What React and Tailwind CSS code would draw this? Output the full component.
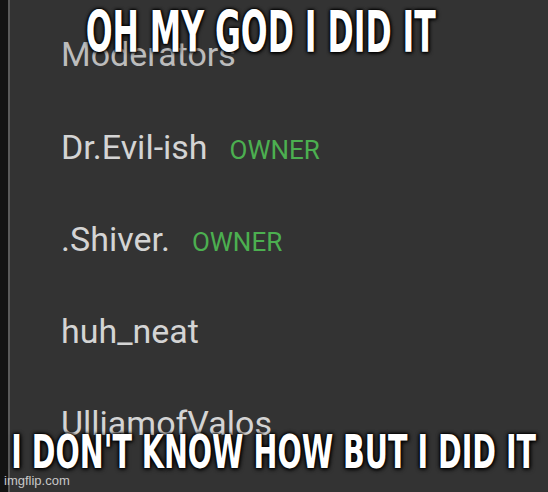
import React from "react";

const mods = [
    { name: "Dr.Evil-ish", owner: true },
    { name: ".Shiver.", owner: true },
    { name: "huh_neat", owner: false },
    { name: "UlliamofValos", owner: false },
];

const memeStyle = "absolute left-0 right-0 flex justify-center";
const memeText = "inline-block whitespace-nowrap text-white font-bold uppercase leading-none [font-family:'DejaVu_Sans_Condensed','DejaVu_Sans',sans-serif] [text-shadow:0_0_2px_#000,0_0_3px_#000,0_0_5px_#000,1px_1px_6px_#000]";

const App = () => {
    return (
        <div className="relative w-[548px] h-[492px] overflow-hidden flex bg-[#131313] [font-family:Roboto,sans-serif]">
            <div className="w-[8px] shrink-0" />
            <div className="w-[2px] shrink-0 bg-[#5a5a5a]" />
            <div className="flex-1 bg-[#333333] pl-[51px] pt-[30px]">
                <h2 className="text-[34px] leading-[48px] text-[#bcbcbc]">Moderators</h2>
                <div className="flex flex-col pt-[3px]">
                    {mods.map((m, i) => (
                        <div key={i} className="flex items-baseline gap-[22px] h-[92px] pt-[46px]">
                            <span className="text-[34px] leading-[40px] text-[#d4d4d4]">{m.name}</span>
                            {m.owner && <span className="text-[26px] leading-[40px] text-[#4caf50]">OWNER</span>}
                        </div>
                    ))}
                </div>
            </div>

            <div className={memeStyle + " top-[4px] pr-[26px]"}>
                <span className={memeText + " text-[57px] scale-x-[0.615]"}>OH MY GOD I DID IT</span>
            </div>
            <div className={memeStyle + " top-[428px]"}>
                <span className={memeText + " text-[47px] scale-x-[0.675]"}>I DON'T KNOW HOW BUT I DID IT</span>
            </div>
            <div className="absolute left-[4px] bottom-[2px] text-[13px] text-[#c8c8c8] [font-family:'Liberation_Sans',sans-serif]">imgflip.com</div>
        </div>
    );
};

export default App;
